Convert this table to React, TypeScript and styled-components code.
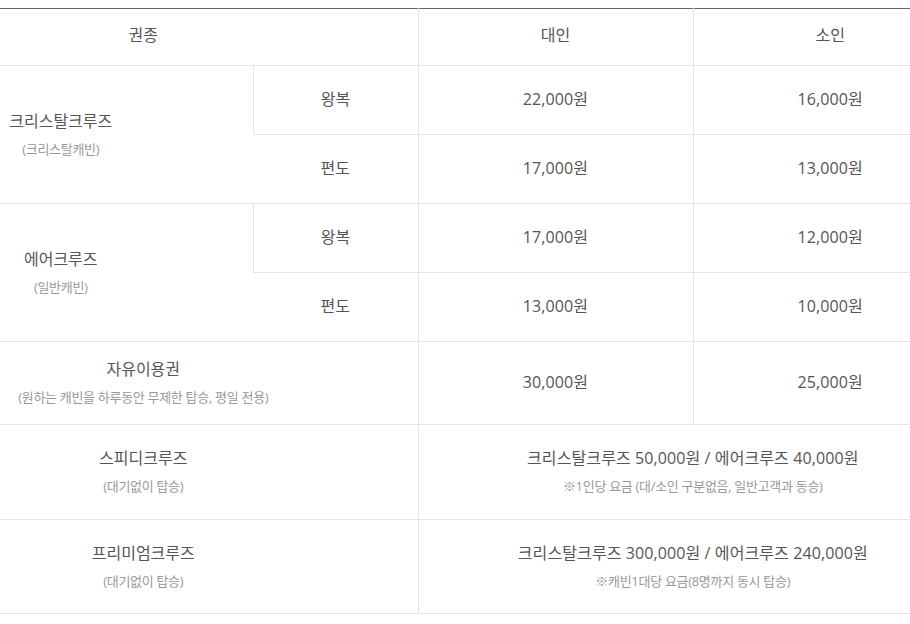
import React from "react";
import styled, { createGlobalStyle } from "styled-components";

const Global = createGlobalStyle`
  html, body { margin: 0; padding: 0; background: #fff; overflow: hidden; }
  body { font-family: "Open Sans", "Noto Sans CJK KR", sans-serif; color: #555; }
`;

const Page = styled.div`
  width: 910px;
  height: 624px;
  overflow: hidden;
  padding-top: 8px;
  box-sizing: border-box;
`;

const Table = styled.table`
  margin-left: -131px;
  width: 1098px;
  table-layout: fixed;
  border-collapse: collapse;
  border-top: 1px solid #666;
`;

const Row = styled.tr<{ $h: number }>`
  height: ${(p) => p.$h}px;
`;

const Cell = styled.td`
  border-bottom: 1px solid #e4e4e4;
  border-left: 1px solid #e4e4e4;
  text-align: center;
  vertical-align: middle;
  padding: 0 0 2px;
  font-size: 16px;
  line-height: 24px;
  color: #555;
  &:first-child { border-left: none; }
`;

const HeadCell = styled(Cell).attrs({ as: "th" })`
  font-weight: 400;
  padding-bottom: 4px;
`;

const Main = styled.div`
  font-size: 16px;
  line-height: 24px;
  color: #555;
`;

const Sub = styled.div`
  margin-top: 6px;
  font-size: 13px;
  line-height: 20px;
  letter-spacing: -0.3px;
  color: #999;
`;

const Price = styled.span`
  letter-spacing: 0.1px;
`;

type Fare = { kind: string; adult: string; child: string };
type Group = { name: string; sub: string; fares: Fare[] };

const groups: Group[] = [
  {
    name: "크리스탈크루즈",
    sub: "(크리스탈캐빈)",
    fares: [
      { kind: "왕복", adult: "22,000원", child: "16,000원" },
      { kind: "편도", adult: "17,000원", child: "13,000원" },
    ],
  },
  {
    name: "에어크루즈",
    sub: "(일반캐빈)",
    fares: [
      { kind: "왕복", adult: "17,000원", child: "12,000원" },
      { kind: "편도", adult: "13,000원", child: "10,000원" },
    ],
  },
];

const specials = [
  {
    name: "스피디크루즈",
    sub: "(대기없이 탑승)",
    price: "크리스탈크루즈 50,000원 / 에어크루즈 40,000원",
    note: "※1인당 요금 (대/소인 구분없음, 일반고객과 동승)",
    h: 95,
  },
  {
    name: "프리미엄크루즈",
    sub: "(대기없이 탑승)",
    price: "크리스탈크루즈 300,000원 / 에어크루즈 240,000원",
    note: "※캐빈1대당 요금(8명까지 동시 탑승)",
    h: 94,
  },
];

export default function App() {
  return (
    <Page>
      <Global />
      <Table>
        <colgroup>
          <col style={{ width: 384 }} />
          <col style={{ width: 165 }} />
          <col style={{ width: 275 }} />
          <col style={{ width: 274 }} />
        </colgroup>
        <thead>
          <Row $h={57}>
            <HeadCell colSpan={2}>권종</HeadCell>
            <HeadCell>대인</HeadCell>
            <HeadCell>소인</HeadCell>
          </Row>
        </thead>
        <tbody>
          {groups.map((g) =>
            g.fares.map((f, i) => (
              <Row $h={69} key={g.name + f.kind}>
                {i === 0 && (
                  <Cell rowSpan={g.fares.length}>
                    <Main>{g.name}</Main>
                    <Sub>{g.sub}</Sub>
                  </Cell>
                )}
                <Cell>{f.kind}</Cell>
                <Cell>
                  <Price>{f.adult}</Price>
                </Cell>
                <Cell>
                  <Price>{f.child}</Price>
                </Cell>
              </Row>
            ))
          )}
          <Row $h={83}>
            <Cell colSpan={2}>
              <Main>자유이용권</Main>
              <Sub>(원하는 캐빈을 하루동안 무제한 탑승, 평일 전용)</Sub>
            </Cell>
            <Cell>
              <Price>30,000원</Price>
            </Cell>
            <Cell>
              <Price>25,000원</Price>
            </Cell>
          </Row>
          {specials.map((s) => (
            <Row $h={s.h} key={s.name}>
              <Cell colSpan={2}>
                <Main>{s.name}</Main>
                <Sub>{s.sub}</Sub>
              </Cell>
              <Cell colSpan={2}>
                <Main>
                  <Price>{s.price}</Price>
                </Main>
                <Sub>{s.note}</Sub>
              </Cell>
            </Row>
          ))}
        </tbody>
      </Table>
    </Page>
  );
}
